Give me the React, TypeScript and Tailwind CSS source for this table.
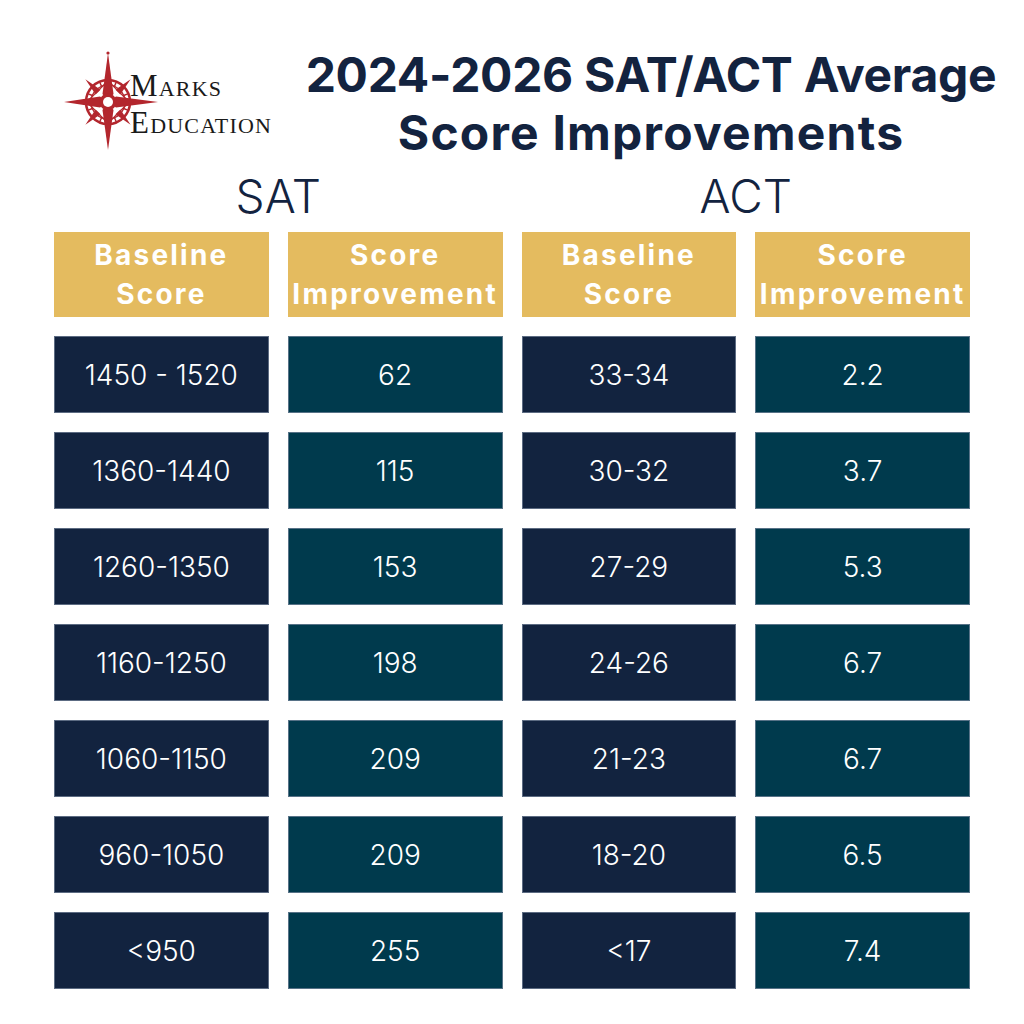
import React from "react";

const sat = [
  ["1450 - 1520", "62"],
  ["1360-1440", "115"],
  ["1260-1350", "153"],
  ["1160-1250", "198"],
  ["1060-1150", "209"],
  ["960-1050", "209"],
  ["<950", "255"],
];

const act = [
  ["33-34", "2.2"],
  ["30-32", "3.7"],
  ["27-29", "5.3"],
  ["24-26", "6.7"],
  ["21-23", "6.7"],
  ["18-20", "6.5"],
  ["<17", "7.4"],
];

function Compass() {
  const red = "#b3262d";
  return (
    <svg width="92" height="100" viewBox="-46 -50 92 100" className="overflow-visible shrink-0">
      {/* diagonal small points */}
      {[45, 135, 225, 315].map(a => (
        <polygon key={a} points="0,-32 3.5,-14 -3.5,-14" fill={red} transform={`rotate(${a})`} />
      ))}
      {/* ring with lattice */}
      <circle r="22" fill="none" stroke={red} strokeWidth="2.5" />
      <circle r="17" fill="none" stroke={red} strokeWidth="1.2" />
      {[22.5, 67.5, 112.5, 157.5, 202.5, 247.5, 292.5, 337.5].map(a => (
        <line key={a} x1="0" y1="-22" x2="0" y2="-17" stroke={red} strokeWidth="1.5" transform={`rotate(${a})`} />
      ))}
      {[0, 90, 180, 270].map(a => (
        <g key={a} transform={`rotate(${a})`}>
          <line x1="-15" y1="-15" x2="15" y2="-15" stroke={red} strokeWidth="1.2" transform="rotate(45)" />
        </g>
      ))}
      {/* main star points */}
      <polygon points="0,-49 5.5,-8 0,0 -5.5,-8" fill={red} />
      <polygon points="0,48 5.5,8 0,0 -5.5,8" fill={red} />
      <polygon points="-44,0 -8,-5.5 0,0 -8,5.5" fill={red} />
      <polygon points="50,0 8,-5.5 0,0 8,5.5" fill={red} />
      <circle cx="0" cy="-49" r="1.6" fill={red} />
      {/* center */}
      <circle r="8.5" fill={red} />
      <circle r="5" fill="white" />
    </svg>
  );
}

function Cell({ text, teal }: { text: string; teal?: boolean }) {
  return (
    <div
      className={`h-[77px] flex items-center justify-center border border-[#7c8aa0]/70 text-white text-[28px] font-light ${
        teal ? "bg-[#003a4d]" : "bg-[#12233f]"
      }`}
    >
      {text}
    </div>
  );
}

function Head({ top, bottom }: { top: string; bottom: string }) {
  return (
    <div className="h-[85px] flex flex-col items-center justify-center bg-[#e4bb5f] text-white text-[28px] font-bold leading-[39px] tracking-[2.2px] whitespace-nowrap">
      <span>{top}</span>
      <span>{bottom}</span>
    </div>
  );
}

export default function App() {
  return (
    <div className="w-[1024px] h-[1024px] bg-white px-[54px] font-['Inter',sans-serif]">
      {/* top */}
      <div className="flex pt-[46px]">
        <div className="w-[278px] shrink-0 flex items-start pl-[8px] pt-[6px]">
          <Compass />
          <div className="-ml-[24px] pt-[15px] font-['Liberation_Serif',serif] text-[#1a1a1a] text-[31px] leading-[37px] tracking-[1.2px] [font-variant:small-caps] z-10">
            <div>Marks</div>
            <div>Education</div>
          </div>
        </div>
        <div className="flex-1 min-w-0 flex flex-col items-center text-[#13233f] text-[48px] font-bold leading-[58px] tracking-[-0.3px] whitespace-nowrap">
          <div>2024-2026 SAT/ACT Average</div>
          <div className="tracking-[1.2px]">Score Improvements</div>
        </div>
      </div>

      {/* section labels */}
      <div className="grid grid-cols-2 gap-[19px] mt-[7px] text-[#13233f] text-[46px] font-light leading-[54px] text-center">
        <div>SAT</div>
        <div>ACT</div>
      </div>

      {/* table */}
      <div className="grid grid-cols-4 gap-[19px] mt-[9px]">
        <Head top="Baseline" bottom="Score" />
        <Head top="Score" bottom="Improvement" />
        <Head top="Baseline" bottom="Score" />
        <Head top="Score" bottom="Improvement" />
        {sat.map((row, i) => (
          <React.Fragment key={i}>
            <Cell text={row[0]} />
            <Cell text={row[1]} teal />
            <Cell text={act[i][0]} />
            <Cell text={act[i][1]} teal />
          </React.Fragment>
        ))}
      </div>
    </div>
  );
}
